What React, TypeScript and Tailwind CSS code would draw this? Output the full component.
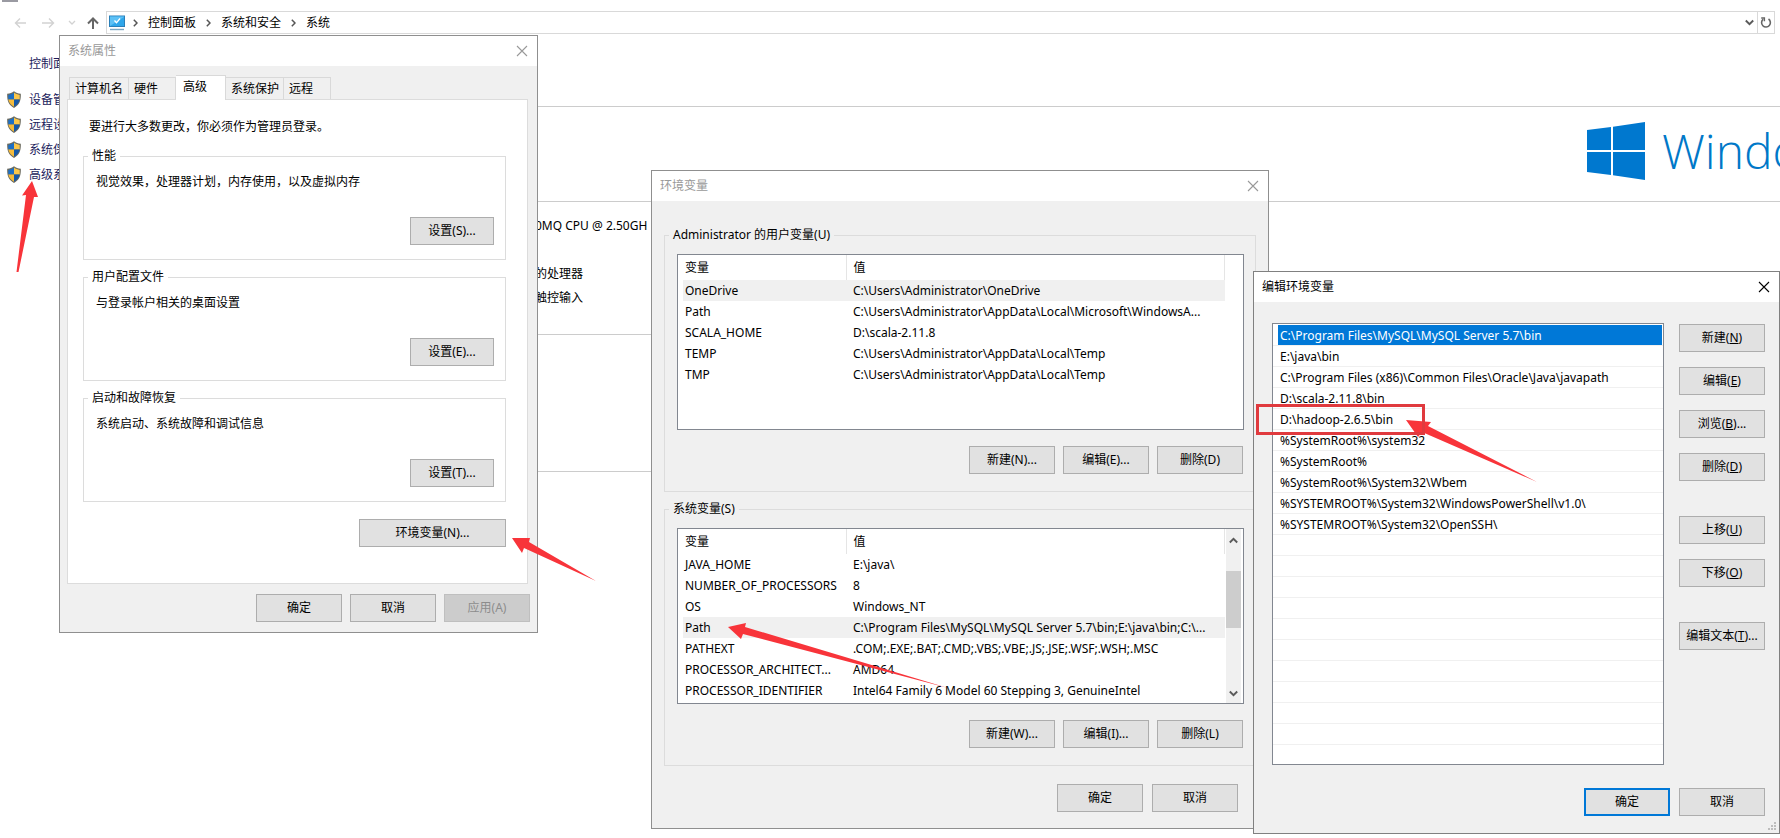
import type { ReactNode } from 'react'

type Variable = {
  name: string
  value: string
}

const userVariables: Variable[] = [
  { name: 'OneDrive', value: 'C:\\Users\\Administrator\\OneDrive' },
  { name: 'Path', value: 'C:\\Users\\Administrator\\AppData\\Local\\Microsoft\\WindowsA...' },
  { name: 'SCALA_HOME', value: 'D:\\scala-2.11.8' },
  { name: 'TEMP', value: 'C:\\Users\\Administrator\\AppData\\Local\\Temp' },
  { name: 'TMP', value: 'C:\\Users\\Administrator\\AppData\\Local\\Temp' },
]

const systemVariables: Variable[] = [
  { name: 'JAVA_HOME', value: 'E:\\java\\' },
  { name: 'NUMBER_OF_PROCESSORS', value: '8' },
  { name: 'OS', value: 'Windows_NT' },
  { name: 'Path', value: 'C:\\Program Files\\MySQL\\MySQL Server 5.7\\bin;E:\\java\\bin;C:\\...' },
  { name: 'PATHEXT', value: '.COM;.EXE;.BAT;.CMD;.VBS;.VBE;.JS;.JSE;.WSF;.WSH;.MSC' },
  { name: 'PROCESSOR_ARCHITECT...', value: 'AMD64' },
  { name: 'PROCESSOR_IDENTIFIER', value: 'Intel64 Family 6 Model 60 Stepping 3, GenuineIntel' },
]

const pathEntries = [
  'C:\\Program Files\\MySQL\\MySQL Server 5.7\\bin',
  'E:\\java\\bin',
  'C:\\Program Files (x86)\\Common Files\\Oracle\\Java\\javapath',
  'D:\\scala-2.11.8\\bin',
  'D:\\hadoop-2.6.5\\bin',
  '%SystemRoot%\\system32',
  '%SystemRoot%',
  '%SystemRoot%\\System32\\Wbem',
  '%SYSTEMROOT%\\System32\\WindowsPowerShell\\v1.0\\',
  '%SYSTEMROOT%\\System32\\OpenSSH\\',
]

const PATH_ROWS = 21

const sideLinks = ['设备管', '远程设', '系统保', '高级系']

function Shield() {
  return (
    <svg className="shrink-0" width="14" height="17" viewBox="0 0 14 16" preserveAspectRatio="none" aria-hidden="true">
      <path d="M7 0.2C5 1.8 3 2.5 0.2 2.6C-0.1 8.5 1.4 13.2 7 15.9C12.6 13.2 14.1 8.5 13.8 2.6C11 2.5 9 1.8 7 0.2Z" fill="#6b6a5e" />
      <path d="M7 1.5C5.3 2.8 3.6 3.5 1.3 3.7V8H7Z" fill="#1d6fc4" />
      <path d="M7 1.5C8.7 2.8 10.4 3.5 12.7 3.7V8H7Z" fill="#fbc74a" />
      <path d="M1.3 8H7V14.8C4 13.2 2 11 1.3 8Z" fill="#f5bb3c" />
      <path d="M12.7 8H7V14.8C10 13.2 12 11 12.7 8Z" fill="#1558a8" />
    </svg>
  )
}

function Crumb() {
  return (
    <svg width="5" height="8" viewBox="0 0 5 8" aria-hidden="true">
      <path d="M0.8 0.8L4 4L0.8 7.2" fill="none" stroke="#555" strokeWidth="1.5" />
    </svg>
  )
}

function Chevron({ up }: { up?: boolean }) {
  return (
    <svg width="9" height="7" viewBox="0 0 9 7" aria-hidden="true">
      <path d={up ? 'M0.8 5.5L4.5 1.8L8.2 5.5' : 'M0.8 1.5L4.5 5.2L8.2 1.5'} fill="none" stroke="#5a5a5a" strokeWidth="1.9" />
    </svg>
  )
}

type WinButtonProps = {
  children: ReactNode
  width?: string
  primary?: boolean
  disabled?: boolean
}

function WinButton({ children, width = 'w-[86px]', primary, disabled }: WinButtonProps) {
  const look = disabled
    ? 'bg-[#cccccc] border border-[#bfbfbf] text-[#8c8c8c]'
    : primary
      ? 'bg-[#e1e1e1] border-2 border-[#0078d7]'
      : 'bg-[#e1e1e1] border border-[#adadad]'
  return (
    <button type="button" disabled={disabled} className={`h-7 shrink-0 text-center whitespace-nowrap ${width} ${look}`}>
      {children}
    </button>
  )
}

function TitleBar({ title, active }: { title: string; active?: boolean }) {
  return (
    <header className={`flex h-[30px] items-center justify-between bg-white pl-2 pr-[9px] ${active ? 'text-black' : 'text-[#999999]'}`}>
      <h2>{title}</h2>
      <button type="button" aria-label="关闭" className="flex">
        <svg width="12" height="12" viewBox="0 0 12 12">
          <path d="M1 1L11 11M11 1L1 11" fill="none" stroke="currentColor" strokeWidth="1.1" />
        </svg>
      </button>
    </header>
  )
}

function SettingsGroup({ title, text, mnemonic }: { title: string; text: string; mnemonic: string }) {
  return (
    <fieldset className="border border-[#dcdcdc] px-1 pb-[14px]">
      <legend className="px-1">{title}</legend>
      <p className="mt-[10px] pl-2">{text}</p>
      <div className="mt-[27px] flex justify-end pr-[7px]">
        <WinButton width="w-[84px]">设置({mnemonic})...</WinButton>
      </div>
    </fieldset>
  )
}

function SystemProperties() {
  const tab = 'h-[22px] border-t border-r border-[#d9d9d9] pl-[5px] text-left'
  return (
    <section className="absolute top-[35px] left-[59px] w-[479px] border border-[#8f8f8f] bg-[#f0f0f0]">
      <TitleBar title="系统属性" />
      <div className="px-[7px] pt-[9px] pb-[10px]">
        <div role="tablist" className="flex items-end pl-[2px]">
          <button type="button" role="tab" className={`w-[60px] border-l ${tab}`}>计算机名</button>
          <button type="button" role="tab" className={`w-[47px] ${tab}`}>硬件</button>
          <button type="button" role="tab" aria-selected="true" className="-mb-px h-[25px] w-[50px] border-t border-r border-[#d9d9d9] bg-white pb-[2px] pl-[7px] text-left">高级</button>
          <button type="button" role="tab" className={`w-[58px] ${tab}`}>系统保护</button>
          <button type="button" role="tab" className={`w-[47px] ${tab}`}>远程</button>
        </div>
        <div className="mr-[2px] border border-[#dcdcdc] bg-white pt-[19px] pr-[21px] pb-9 pl-[15px]">
          <p className="pl-[6px]">要进行大多数更改，你必须作为管理员登录。</p>
          <div className="mt-[13px] flex flex-col gap-[9px]">
            <SettingsGroup title="性能" text="视觉效果，处理器计划，内存使用，以及虚拟内存" mnemonic="S" />
            <SettingsGroup title="用户配置文件" text="与登录帐户相关的桌面设置" mnemonic="E" />
            <SettingsGroup title="启动和故障恢复" text="系统启动、系统故障和调试信息" mnemonic="T" />
          </div>
          <div className="mt-[17px] flex justify-end">
            <WinButton width="w-[147px]">环境变量(N)...</WinButton>
          </div>
        </div>
        <div className="mt-[10px] flex justify-end gap-2">
          <WinButton>确定</WinButton>
          <WinButton>取消</WinButton>
          <WinButton disabled>应用(A)</WinButton>
        </div>
      </div>
    </section>
  )
}

type VariableGroupProps = {
  title: string
  rows: Variable[]
  selected: number
  mnemonics: string[]
  scroll?: boolean
}

function VariableGroup({ title, rows, selected, mnemonics, scroll }: VariableGroupProps) {
  return (
    <fieldset className="border border-[#dcdcdc] px-1 pb-[17px]">
      <legend className="px-1">{title}</legend>
      <div className="mt-[11px] mr-[7px] ml-2 flex h-[176px] overflow-hidden border border-[#828790] bg-white pl-[5px]">
        <div className="min-w-0 flex-1">
          <table className="w-full table-fixed border-collapse text-left whitespace-nowrap">
            <thead>
              <tr className="h-[25px]">
                <th className="w-[163px] border-r border-[#e5e5e5] pl-[2px] font-normal">变量</th>
                <th className="border-r border-[#e5e5e5] pl-[7px] font-normal">值</th>
              </tr>
            </thead>
            <tbody>
              {rows.map((row, index) => (
                <tr key={row.name} className={index === selected ? 'h-[21px] bg-[#f0f0f0]' : 'h-[21px]'}>
                  <td className="pl-[2px]">{row.name}</td>
                  <td className="pl-[7px]">{row.value}</td>
                </tr>
              ))}
            </tbody>
          </table>
        </div>
        <div className="w-[18px] pl-px">
          {scroll && (
            <div className="flex h-full w-[15px] flex-col items-center bg-[#f0f0f0] pt-2 pb-[6px]">
              <Chevron up />
              <div className="mt-[27px] h-[57px] w-full bg-[#cdcdcd]" />
              <div className="mt-auto flex"><Chevron /></div>
            </div>
          )}
        </div>
      </div>
      <div className="mx-2 mt-4 flex justify-end gap-2">
        <WinButton>新建({mnemonics[0]})...</WinButton>
        <WinButton>编辑({mnemonics[1]})...</WinButton>
        <WinButton>删除({mnemonics[2]})</WinButton>
      </div>
    </fieldset>
  )
}

function EnvironmentVariables() {
  return (
    <section className="absolute top-[170px] left-[651px] w-[618px] border border-[#8f8f8f] bg-[#f0f0f0]">
      <TitleBar title="环境变量" />
      <div className="px-3 pt-[26px] pb-4">
        <div className="flex flex-col gap-[9px]">
          <VariableGroup title="Administrator 的用户变量(U)" rows={userVariables} selected={0} mnemonics={['N', 'E', 'D']} />
          <VariableGroup title="系统变量(S)" rows={systemVariables} selected={3} mnemonics={['W', 'I', 'L']} scroll />
        </div>
        <div className="mt-[18px] mr-[18px] flex justify-end gap-[9px]">
          <WinButton>确定</WinButton>
          <WinButton>取消</WinButton>
        </div>
      </div>
    </section>
  )
}

function EditVariable() {
  return (
    <section className="absolute top-[271px] left-[1253px] w-[527px] border border-[#808080] bg-[#f0f0f0]">
      <TitleBar title="编辑环境变量" active />
      <div className="pt-[21px] pr-[14px] pb-[17px] pl-[18px]">
        <div className="flex gap-[15px]">
          <ul className="h-[442px] min-w-0 flex-1 overflow-hidden border border-[#828790] bg-white pt-px">
            {Array.from({ length: PATH_ROWS }, (_, index) => (
              <li key={index} className="h-[21px] border-b border-[#f0f0f0] pr-px pl-[5px]">
                <div className={index === 0 ? 'h-5 bg-[#0078d7] pl-[2px] leading-[22px] text-white' : 'h-5 pl-[2px] leading-[22px]'}>
                  {pathEntries[index]}
                </div>
              </li>
            ))}
          </ul>
          <div className="flex flex-col gap-[15px] pt-px">
            <WinButton>新建(<u>N</u>)</WinButton>
            <WinButton>编辑(<u>E</u>)</WinButton>
            <WinButton>浏览(<u>B</u>)...</WinButton>
            <WinButton>删除(<u>D</u>)</WinButton>
            <div className="mt-5 flex flex-col gap-[15px]">
              <WinButton>上移(<u>U</u>)</WinButton>
              <WinButton>下移(<u>O</u>)</WinButton>
            </div>
            <div className="mt-5 flex">
              <WinButton>编辑文本(<u>T</u>)...</WinButton>
            </div>
          </div>
        </div>
        <div className="mt-[23px] flex justify-end gap-[9px]">
          <WinButton primary>确定</WinButton>
          <WinButton>取消</WinButton>
        </div>
      </div>
      <svg className="absolute right-[2px] bottom-[2px]" width="9" height="9" viewBox="0 0 9 9" aria-hidden="true">
        <path d="M6 0h2v2h-2zM3 3h2v2h-2zM6 3h2v2h-2zM0 6h2v2h-2zM3 6h2v2h-2zM6 6h2v2h-2z" fill="#bdbdbd" />
      </svg>
    </section>
  )
}

function AddressBar() {
  return (
    <div className="flex h-[23px] items-center pr-[5px]">
      <div className="flex w-[106px] items-center pl-[14px]">
        <svg width="86" height="14" viewBox="0 0 86 14" fill="none" aria-hidden="true">
          <path d="M12 7H1.5M6 2.5L1.5 7L6 11.5" stroke="#d2d2d2" strokeWidth="1.4" />
          <path d="M28 7H39.5M35 2.5L39.5 7L35 11.5" stroke="#d2d2d2" strokeWidth="1.4" />
          <path d="M55 5L58 8L61 5" stroke="#d2d2d2" strokeWidth="1.3" />
          <path d="M79 13V2.5M74 7.5L79 2.5L84 7.5" stroke="#666666" strokeWidth="2" />
        </svg>
      </div>
      <nav className="flex h-[23px] min-w-0 flex-1 items-center border border-[#d9d9d9] pl-[2px]">
        <svg width="16" height="16" viewBox="0 0 16 16" aria-hidden="true">
          <rect x="0.5" y="1" width="15" height="10.5" fill="#2ea6ea" stroke="#2a7fb8" />
          <path d="M1 11L15 2V1.5H1Z" fill="#5cc0f5" />
          <path d="M5.5 5.5L7.5 7.8L11 3.5" fill="none" stroke="#fff" strokeWidth="1.3" />
          <path d="M1 14.5H15" stroke="#7aa7c4" strokeWidth="1.4" />
        </svg>
        <span className="flex items-center gap-[10px] pl-2">
          <Crumb />
          <a href="#control">控制面板</a>
        </span>
        <span className="flex items-center gap-[10px] pl-[10px]">
          <Crumb />
          <a href="#security">系统和安全</a>
        </span>
        <span className="flex items-center gap-[10px] pl-[10px]">
          <Crumb />
          <a href="#system">系统</a>
        </span>
        <button type="button" aria-label="展开" className="ml-auto flex px-[3px]">
          <Chevron />
        </button>
        <button type="button" aria-label="刷新" className="flex h-full w-[17px] items-center justify-center border-l border-[#d9d9d9]">
          <svg width="12" height="13" viewBox="0 0 12 13" fill="none">
            <path d="M8.5 3A4.4 4.4 0 1 1 3.2 3.2" stroke="#666666" strokeWidth="1.6" />
            <path d="M1.2 2H4.4V5.2" stroke="#666666" strokeWidth="1.4" />
          </svg>
        </button>
      </nav>
    </div>
  )
}

function ControlPanel() {
  return (
    <div>
      <div className="ml-[2px] h-[11px]">
        <div className="h-[2px] w-4 bg-[#9a9aa2]" />
      </div>
      <AddressBar />
      <div className="flex">
        <aside className="w-[59px] shrink-0 overflow-hidden pt-[22px] pl-[7px] whitespace-nowrap text-[#1c1c5c]">
          <a href="#home" className="block pl-[22px]">控制面</a>
          <ul className="mt-[19px] flex flex-col gap-2">
            {sideLinks.map((label) => (
              <li key={label}>
                <a href="#side" className="flex items-center gap-2">
                  <Shield />
                  {label}
                </a>
              </li>
            ))}
          </ul>
        </aside>
        <main className="min-w-0 flex-1 pt-[72px]">
          <div className="flex h-[96px] justify-end border-y border-[#cccccc] pt-[15px]">
            <div className="flex h-[58px] w-[193px] gap-[17px] overflow-hidden whitespace-nowrap text-[#0078c8]">
              <svg className="shrink-0" width="58" height="58" viewBox="0 0 58 58" aria-hidden="true">
                <path d="M0 8L24 5V28H0ZM26 4.7L58 0V28H26ZM0 30H24V53L0 50ZM26 30H58V58L26 53.3Z" fill="#0078cf" />
              </svg>
              <span className="font-['Open_Sans','Noto_Sans',sans-serif] text-[48px] leading-[58px] font-[350]">Windows 10</span>
            </div>
          </div>
          <div className="h-[133px] border-b border-[#cccccc] pt-4 pl-[476px]">
            <p>0MQ CPU @ 2.50GH</p>
            <p className="mt-8">的处理器</p>
            <p className="mt-2">触控输入</p>
          </div>
          <div className="h-[137px] border-b border-[#cccccc]" />
        </main>
      </div>
    </div>
  )
}

// red pointers and the box around the hadoop entry
function Marks() {
  return (
    <svg className="pointer-events-none absolute inset-0 h-full w-full" aria-hidden="true">
      <g fill="#f8343a">
        <path d="M32 181L38 197L34 197L18.5 272L16.5 272L26 195L22 195.5Z" />
        <path d="M512 538L530 538L529 542L596 581L524 548L522 553Z" />
        <path d="M728 627L746 623L745 627L948 688L743 634L741 639Z" />
        <path d="M1406 420L1431 422L1428 426L1537 482L1422 432L1418 437Z" />
      </g>
      <rect x="1257.5" y="405.5" width="166" height="28" fill="none" stroke="#e03a3e" strokeWidth="3" />
    </svg>
  )
}

export default function App() {
  return (
    <div className="relative min-h-screen overflow-hidden bg-white font-['Noto_Sans','Noto_Sans_CJK_SC',sans-serif] text-xs text-black">
      <ControlPanel />
      <SystemProperties />
      <EnvironmentVariables />
      <EditVariable />
      <Marks />
    </div>
  )
}
